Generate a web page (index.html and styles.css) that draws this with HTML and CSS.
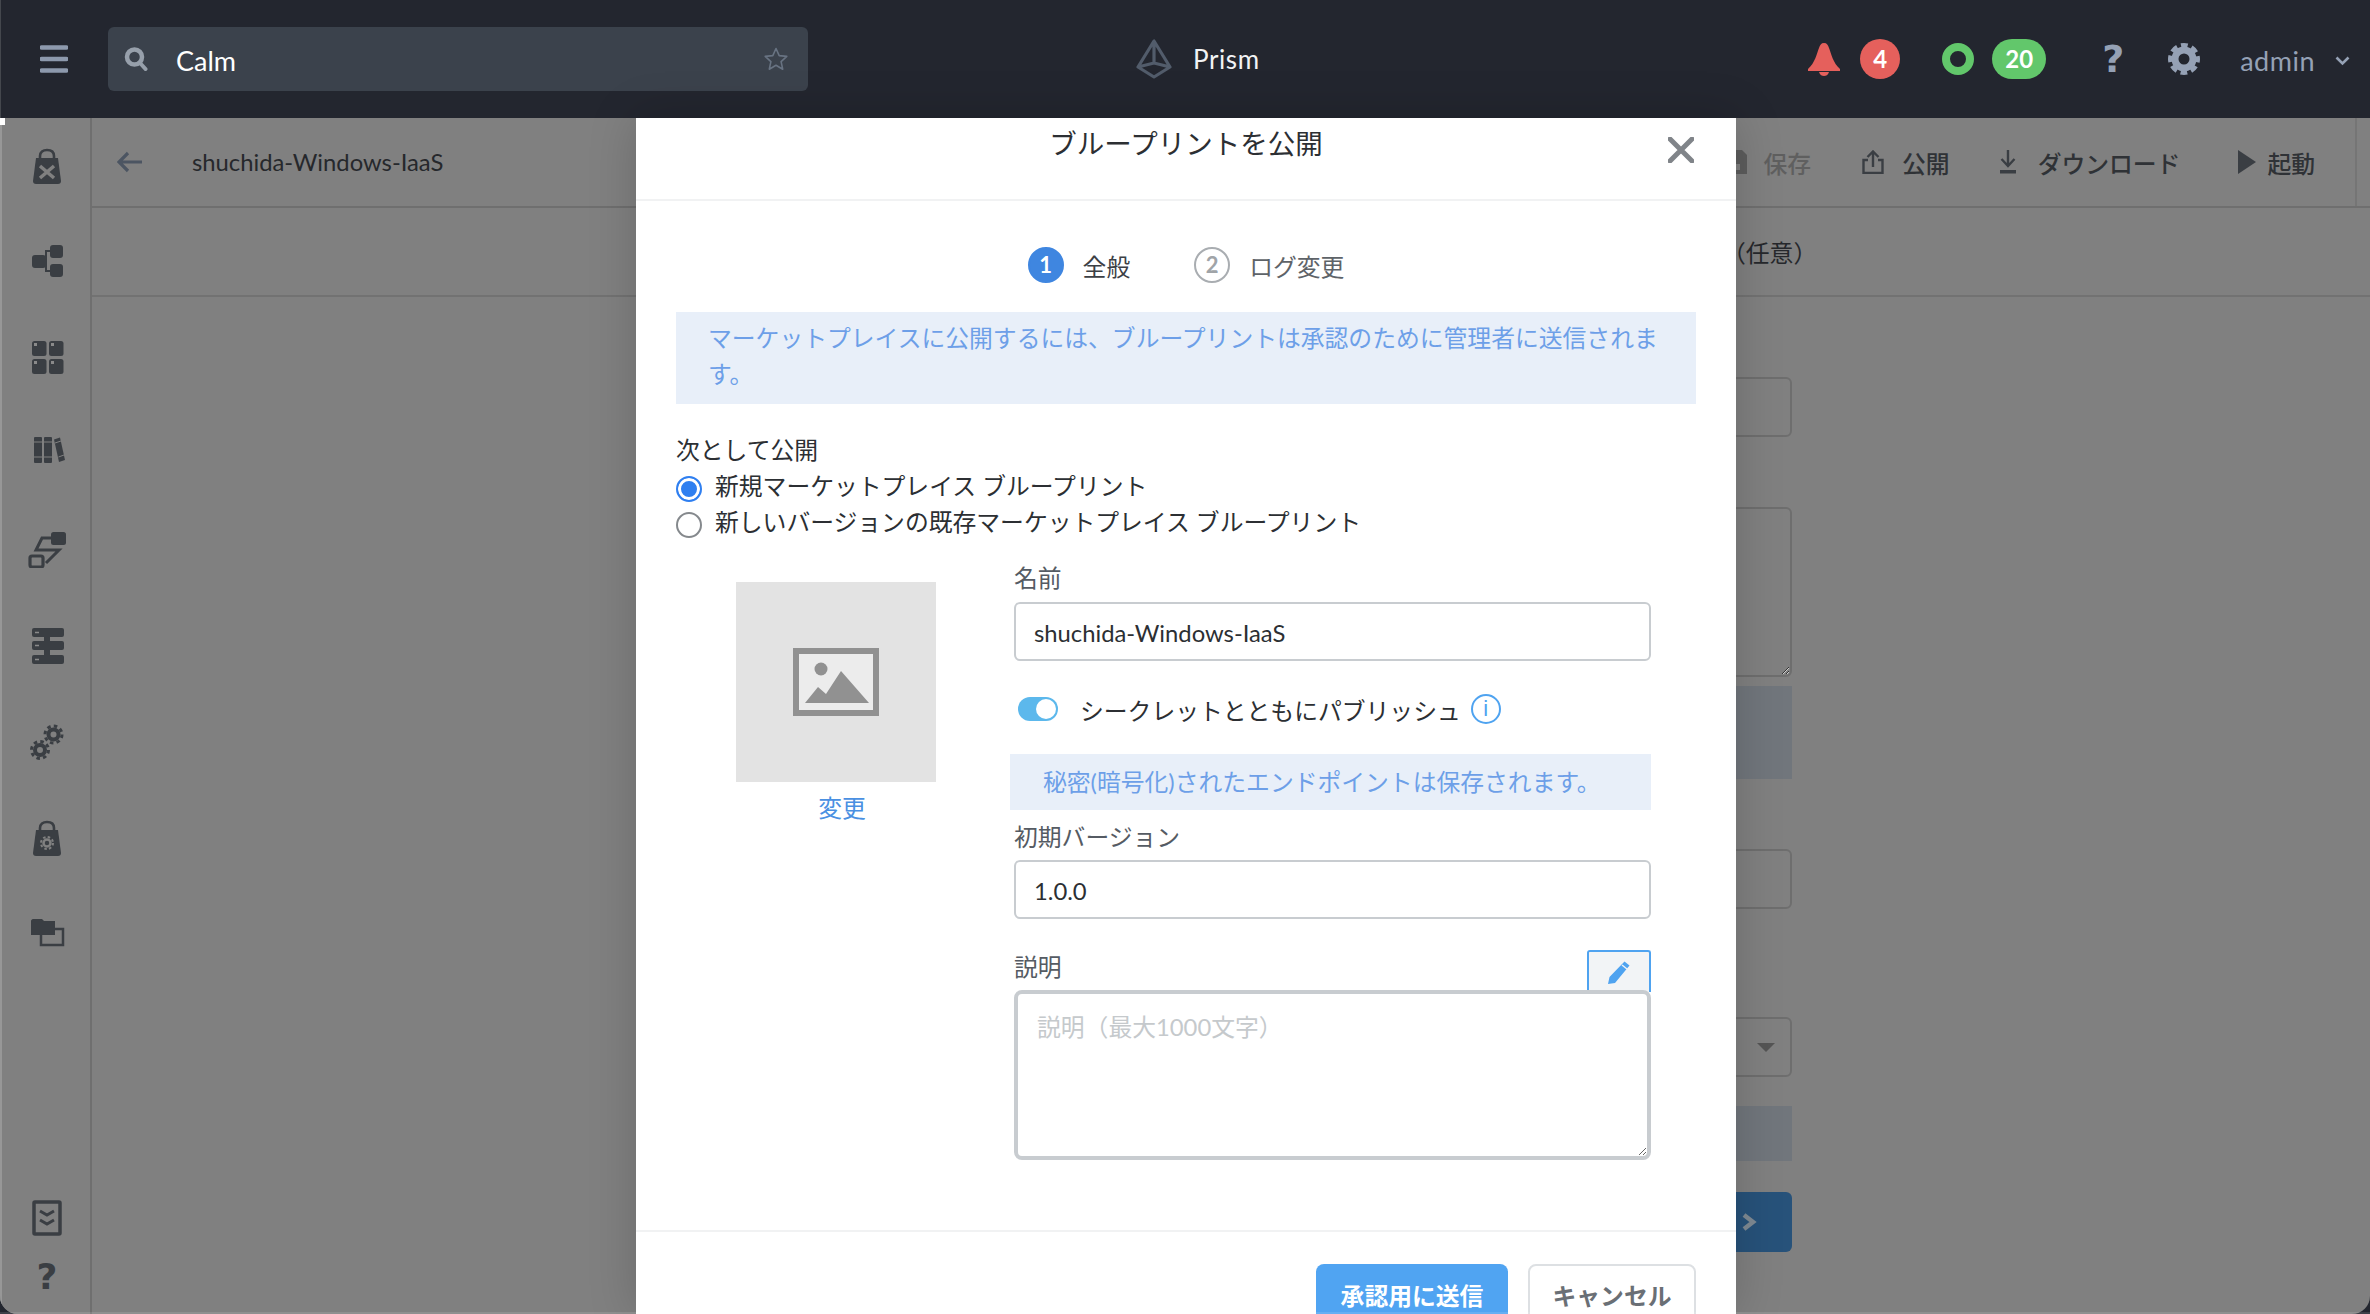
FILE: index.html
```html
<!DOCTYPE html>
<html lang="ja">

<head>
    <meta charset="UTF-8">
    <meta name="viewport" content="width=device-width, initial-scale=1.0">
    <title>Prism - Calm</title>
    <link rel="stylesheet" href="styles.css">
</head>

<body>
    <header class="topbar">
        <svg class="menu-icon" width="28" height="28" viewBox="0 0 28 28">
            <path d="M1.5 2.5H26.5M1.5 14H26.5M1.5 25.5H26.5" stroke="#8d99ad" stroke-width="4.5" stroke-linecap="round" />
        </svg>
        <div class="search">
            <svg width="24" height="24" viewBox="0 0 24 24">
                <circle cx="10.5" cy="10" r="7.5" fill="none" stroke="#97a0ab" stroke-width="4.5" />
                <path d="M16 16L21.5 22" stroke="#97a0ab" stroke-width="4" stroke-linecap="round" />
            </svg>
            <span class="search-text">Calm</span>
            <svg class="star" width="24" height="24" viewBox="0 0 24 24">
                <path d="M12 1.5L15.2 8.6 22.8 9.4 17.1 14.6 18.7 22.2 12 18.3 5.3 22.2 6.9 14.6 1.2 9.4 8.8 8.6Z" fill="none" stroke="#687382" stroke-width="1.6" stroke-linejoin="round" />
            </svg>
        </div>
        <div class="brand">
            <svg width="36" height="40" viewBox="0 0 36 40">
                <path d="M18 2L2 28 18 38 34 28ZM18 2V24M2 28L18 24 34 28" fill="none" stroke="#525c6b" stroke-width="3.2" stroke-linejoin="round" />
            </svg>
            <span>Prism</span>
        </div>
        <div class="status">
            <svg width="32" height="33" viewBox="0 0 32 33">
                <path d="M16 0C19 0 20 2 21 5 23 10 25 20 32 26V28H0V26C7 20 9 10 11 5 12 2 13 0 16 0Z" fill="#e5605c" />
                <path d="M11 29H21C20 32 18 33 16 33 14 33 12 32 11 29Z" fill="#e5605c" />
            </svg>
            <span class="badge badge-red">4</span>
            <span class="ring"></span>
            <span class="badge badge-green">20</span>
            <span class="help">?</span>
            <svg class="gear" width="32" height="32" viewBox="0 0 32 32">
                <circle cx="16" cy="16" r="9" fill="none" stroke="#95a1b5" stroke-width="7" />
                <circle cx="16" cy="16" r="13.5" fill="none" stroke="#95a1b5" stroke-width="5" stroke-dasharray="6.6 3.99" stroke-dashoffset="3.3" />
            </svg>
            <span class="user">admin</span>
            <svg class="caret" width="15" height="10" viewBox="0 0 15 10">
                <path d="M1.5 1.5L7.5 7.5 13.5 1.5" fill="none" stroke="#95a1b5" stroke-width="2.6" />
            </svg>
        </div>
    </header>

    <div class="app">
        <nav class="sidebar">
            <span class="side-item">
                <svg width="36" height="36" viewBox="0 0 36 36">
                    <path d="M11 11V8C11 4 14 2 18 2S25 4 25 8V11" fill="none" stroke="#3a3e43" stroke-width="2.6" />
                    <path d="M7 10H29L32 33C32 35 31 36 29 36H7C5 36 4 35 4 33Z" fill="#3a3e43" />
                    <path d="M11 18L25 30M25 18L11 30" stroke="#808080" stroke-width="3.5" />
                </svg>
            </span>
            <span class="side-item">
                <svg width="36" height="36" viewBox="0 0 36 36">
                    <rect x="3" y="11" width="14" height="13" rx="3" fill="#3a3e43" />
                    <rect x="21" y="1" width="13" height="13" rx="3" fill="#3a3e43" />
                    <rect x="21" y="20" width="13" height="13" rx="3" fill="#3a3e43" />
                    <path d="M21 7H17V27H21M14 17H17" fill="none" stroke="#3a3e43" stroke-width="2" />
                </svg>
            </span>
            <span class="side-item">
                <svg width="36" height="36" viewBox="0 0 36 36">
                    <rect x="3" y="1" width="14.5" height="15" rx="2.5" fill="#3a3e43" />
                    <rect x="20" y="1" width="14.5" height="15" rx="2.5" fill="#3a3e43" />
                    <rect x="3" y="19" width="14.5" height="15" rx="2.5" fill="#3a3e43" />
                    <rect x="20" y="19" width="14.5" height="15" rx="2.5" fill="#3a3e43" />
                    <path d="M5 3h3v3H5zM22 3h3v3h-3zM5 21h3v3H5zM22 21h3v3h-3z" fill="#8a8a8a" />
                </svg>
            </span>
            <span class="side-item">
                <svg width="36" height="36" viewBox="0 0 36 36">
                    <rect x="5" y="1" width="8" height="26" rx="1" fill="#3a3e43" />
                    <rect x="15" y="1" width="8" height="26" rx="1" fill="#3a3e43" />
                    <path d="M25 3.5L31 1.5 36 24 30 26Z" fill="#3a3e43" />
                    <path d="M5 6H13M5 21H13M15 6H23M15 21H23M26 7L32 5M29.5 21L35 19" stroke="#808080" stroke-width="1" />
                </svg>
            </span>
            <span class="side-item">
                <svg width="38" height="36" viewBox="0 0 38 36">
                    <path d="M24 6H14L8 18H31L18 31" fill="none" stroke="#3a3e43" stroke-width="3" />
                    <rect x="23" y="0" width="15" height="13" rx="2.5" fill="#3a3e43" />
                    <rect x="2" y="24" width="13" height="11" rx="2" fill="#808080" stroke="#3a3e43" stroke-width="3.2" />
                </svg>
            </span>
            <span class="side-item">
                <svg width="36" height="36" viewBox="0 0 36 36">
                    <path d="M15 0H21V36H15Z" fill="#3a3e43" />
                    <rect x="3" y="0" width="32" height="9" rx="2" fill="#3a3e43" />
                    <rect x="3" y="13" width="32" height="9" rx="2" fill="#3a3e43" />
                    <rect x="3" y="27" width="32" height="9" rx="2" fill="#3a3e43" />
                    <path d="M6 4.5H10M6 17.5H10M6 31.5H10" stroke="#8a8a8a" stroke-width="1.6" />
                </svg>
            </span>
            <span class="side-item">
                <svg width="36" height="36" viewBox="0 0 36 36">
                    <circle cx="11" cy="26" r="5" fill="none" stroke="#3a3e43" stroke-width="4" />
                    <circle cx="11" cy="26" r="8.5" fill="none" stroke="#3a3e43" stroke-width="3" stroke-dasharray="3.5 3.18" />
                    <circle cx="24.5" cy="10.5" r="5" fill="none" stroke="#3a3e43" stroke-width="4" />
                    <circle cx="24.5" cy="10.5" r="8.5" fill="none" stroke="#3a3e43" stroke-width="3" stroke-dasharray="3.5 3.18" />
                </svg>
            </span>
            <span class="side-item">
                <svg width="36" height="36" viewBox="0 0 36 36">
                    <path d="M11 12V8C11 4 14 2 18 2S25 4 25 8V12" fill="none" stroke="#3a3e43" stroke-width="2.6" />
                    <path d="M7 10H29L32 33C32 35 31 36 29 36H7C5 36 4 35 4 33Z" fill="#3a3e43" />
                    <circle cx="18" cy="23" r="3.5" fill="none" stroke="#808080" stroke-width="2.5" />
                    <circle cx="18" cy="23" r="6" fill="none" stroke="#808080" stroke-width="2" stroke-dasharray="2.5 2.21" />
                </svg>
            </span>
            <span class="side-item">
                <svg width="36" height="36" viewBox="0 0 36 36">
                    <path d="M12 13H34V29H12Z" fill="none" stroke="#3a3e43" stroke-width="2.5" />
                    <path d="M2 5C2 4 3 3 4 3H13L15 5H26V19H2Z" fill="#3a3e43" />
                </svg>
            </span>
            <span class="side-item side-bottom">
                <svg width="36" height="36" viewBox="0 0 36 36">
                    <rect x="5" y="2" width="26" height="32" rx="1" fill="none" stroke="#3a3e43" stroke-width="3.5" />
                    <path d="M11 11L18 15 25 11M11 20L18 24 25 20" fill="none" stroke="#3a3e43" stroke-width="3" />
                </svg>
            </span>
            <span class="side-item side-q">?</span>
        </nav>

        <main class="page">
            <div class="toolbar">
                <svg class="back" width="25" height="22" viewBox="0 0 25 22">
                    <path d="M11 2L2 11 11 20M2 11H25" fill="none" stroke="#4c5562" stroke-width="3.2" />
                </svg>
                <span class="bp-name">shuchida-Windows-IaaS</span>
                <div class="actions">
                    <span class="action action-off">
                        <svg width="24" height="24" viewBox="0 0 24 24">
                            <path d="M2 0H19L24 5V24H0V2Z" fill="#5d5d5d" />
                            <rect x="5" y="14" width="12" height="6" fill="#808080" />
                        </svg>
                        保存
                    </span>
                    <span class="action action-publish">
                        <svg width="22" height="24" viewBox="0 0 22 24">
                            <path d="M6 10H1.5V23H20.5V10H16M11 17V2M5.5 7L11 1.5 16.5 7" fill="none" stroke="#3a3e43" stroke-width="2.4" />
                        </svg>
                        公開
                    </span>
                    <span class="action action-download">
                        <svg width="18" height="24" viewBox="0 0 18 24">
                            <path d="M9 0V15M2.5 9L9 16 15.5 9" fill="none" stroke="#3a3e43" stroke-width="2.4" />
                            <rect x="1" y="20" width="16" height="3.5" fill="#3a3e43" />
                        </svg>
                        ダウンロード
                    </span>
                    <span class="action action-launch">
                        <svg width="18" height="24" viewBox="0 0 18 24">
                            <path d="M0 0L18 12 0 24Z" fill="#3a3e43" />
                        </svg>
                        起動
                    </span>
                </div>
            </div>
            <div class="section-head">（任意）</div>
            <div class="bg-form">
                <div class="bg-input bg-first"></div>
                <textarea class="bg-area" disabled></textarea>
                <div class="bg-note bg-note-tall"></div>
                <div class="bg-input bg-second"></div>
                <div class="bg-input bg-select"><span class="bg-caret"></span></div>
                <div class="bg-note bg-note-short"></div>
                <div class="bg-next">
                    <svg width="16" height="18" viewBox="0 0 16 18">
                        <path d="M3 2L12 9 3 16" fill="none" stroke="#7f8a93" stroke-width="4.5" />
                    </svg>
                </div>
            </div>
        </main>
    </div>

    <section class="modal">
        <div class="modal-head">
            <h2>ブループリントを公開</h2>
            <svg class="close" width="26" height="26" viewBox="0 0 26 26">
                <path d="M2 2L24 24M24 2L2 24" stroke="#808489" stroke-width="5" stroke-linecap="round" />
            </svg>
        </div>
        <div class="modal-body">
            <ol class="steps">
                <li class="step step-on"><span class="step-no">1</span>全般</li>
                <li class="step"><span class="step-no">2</span>ログ変更</li>
            </ol>
            <p class="note note-wide">マーケットプレイスに公開するには、ブループリントは承認のために管理者に送信されます。</p>

            <div class="publish-as">
                <div class="field-title">次として公開</div>
                <label class="radio"><input type="radio" name="as" checked>新規マーケットプレイス ブループリント</label>
                <label class="radio"><input type="radio" name="as">新しいバージョンの既存マーケットプレイス ブループリント</label>
            </div>

            <div class="form-grid">
                <div class="thumb-col">
                    <div class="thumb">
                        <svg width="86" height="68" viewBox="0 0 86 68">
                            <rect x="3" y="3" width="80" height="62" fill="#ececec" stroke="#919191" stroke-width="6" />
                            <circle cx="28" cy="21" r="6.5" fill="#919191" />
                            <path d="M12 55L25 39 33 46 48 23 76 55Z" fill="#919191" />
                        </svg>
                    </div>
                    <a class="thumb-link">変更</a>
                </div>
                <div class="form-col">
                    <label class="field-label">名前</label>
                    <input class="text-input" type="text" value="shuchida-Windows-IaaS">
                    <div class="secret-row">
                        <span class="toggle"></span>
                        <span>シークレットとともにパブリッシュ</span>
                        <span class="info">i</span>
                    </div>
                    <p class="note note-secret">秘密(暗号化)されたエンドポイントは保存されます。</p>
                    <label class="field-label label-version">初期バージョン</label>
                    <input class="text-input input-version" type="text" value="1.0.0">
                    <div class="desc-head">
                        <label class="field-label">説明</label>
                        <span class="edit-btn">
                            <svg width="24" height="24" viewBox="0 0 24 24">
                                <path d="M17.5 1.5L22.5 5.5 8 23 1 24 2.5 17ZM1 24L2.5 19 6 22Z" fill="#4fa3f0" />
                                <path d="M15 5L20 9" stroke="#f2f4f6" stroke-width="1.5" />
                            </svg>
                        </span>
                    </div>
                    <textarea class="desc" placeholder="説明（最大1000文字）"></textarea>
                </div>
            </div>
        </div>
        <div class="modal-foot">
            <button class="btn btn-primary">承認用に送信</button>
            <button class="btn btn-cancel">キャンセル</button>
        </div>
    </section>
</body>

</html>
```

FILE: styles.css
```css
* {
    box-sizing: border-box;
}

html,
body {
    height: 100%;
}

body {
    position: relative;
    margin: 0;
    overflow: hidden;
    background-color: #23262f;
    color: #2c2f33;
    font-family: Lato, "Noto Sans CJK JP", sans-serif;
    font-size: 23.8px;
}

/* small white notch at the corner of the nav */
body::before {
    content: "";
    position: absolute;
    top: 118px;
    left: 0;
    width: 5px;
    height: 7px;
    background-color: #fff;
}

/* faint line along the bottom of the window */
body::after {
    content: "";
    position: absolute;
    left: 0;
    right: 0;
    bottom: 0;
    height: 2px;
    background-color: rgba(255, 255, 255, 0.12);
}

.topbar {
    display: flex;
    align-items: center;
    height: 118px;
    padding: 0 20px 0 40px;
    border-left: 1px solid #44474d;
}

.menu-icon {
    flex: none;
    margin-left: -1px;
}

.search {
    display: flex;
    align-items: center;
    width: 700px;
    height: 64px;
    margin-left: 40px;
    padding: 0 20px 0 16px;
    border-radius: 6px;
    background-color: #3b424c;
}

.search-text {
    margin-left: 28px;
    padding-top: 2px;
    color: #fff;
    font-size: 27px;
}

.star {
    margin-left: auto;
}

.brand {
    display: flex;
    align-items: center;
    gap: 21px;
    margin-left: 328px;
    color: #f2f3f5;
    font-size: 26px;
    letter-spacing: 0.6px;
}

.status {
    display: flex;
    align-items: center;
    margin-left: auto;
}

.badge {
    height: 40px;
    border-radius: 20px;
    color: #fff;
    font-size: 24px;
    font-weight: 700;
    line-height: 40px;
    text-align: center;
}

.badge-red {
    width: 40px;
    margin-left: 20px;
    background-color: #e5605c;
}

.ring {
    width: 32px;
    height: 32px;
    margin-left: 42px;
    border: 8px solid #62c76b;
    border-radius: 50%;
}

.badge-green {
    width: 54px;
    margin-left: 18px;
    background-color: #62c76b;
}

.help {
    width: 20px;
    margin-left: 56px;
    color: #95a1b5;
    font-family: "DejaVu Sans", sans-serif;
    font-size: 38px;
    font-weight: 700;
    line-height: 40px;
    text-align: center;
}

.gear {
    margin-left: 46px;
}

.user {
    margin-left: 40px;
    color: #95a1b5;
    font-size: 27px;
    letter-spacing: 0.5px;
    padding-top: 2px;
}

.caret {
    margin: 4px 0 0 20px;
}

.app {
    display: flex;
    height: 1196px;
    border-radius: 0 0 18px 18px;
    background-color: #808080;
    overflow: hidden;
}

.sidebar {
    display: flex;
    flex: none;
    flex-direction: column;
    align-items: center;
    width: 92px;
    padding: 0 0 9px 2px;
    border-left: 2px solid #979797;
    border-right: 2px solid #6f6f6f;
    background-color: #808080;
}

.side-item {
    display: flex;
    flex: none;
    align-items: center;
    justify-content: center;
    height: 96px;
    color: #3a3e43;
}

.side-bottom {
    height: 58px;
    margin-top: auto;
}

.side-q {
    height: 58px;
    font-family: "DejaVu Sans", sans-serif;
    font-size: 36px;
    font-weight: 700;
}

.page {
    flex: 1;
    min-width: 0;
}

.toolbar {
    display: flex;
    align-items: center;
    height: 90px;
    padding: 0 13px 0 25px;
    border-bottom: 2px solid #6f6f6f;
}

.back {
    flex: none;
}

.bp-name {
    margin-left: 50px;
    color: #26282c;
}

.actions {
    display: flex;
    align-items: center;
    align-self: stretch;
    margin-left: auto;
    padding-right: 40px;
    border-right: 2px solid #757575;
}

.action {
    display: flex;
    align-items: center;
    gap: 18px;
    color: #2f3236;
    font-weight: 500;
}

.action-off {
    color: #5f5f5f;
    gap: 16px;
}

.action-publish {
    margin-left: 51px;
}

.action-download {
    margin-left: 49px;
    gap: 21px;
}

.action-launch {
    margin-left: 58px;
    gap: 11px;
}

.section-head {
    height: 89px;
    padding-left: 1630px;
    border-bottom: 2px solid #727272;
    color: #26282c;
    line-height: 90px;
}

.bg-form {
    display: flex;
    flex-direction: column;
    width: 691px;
    margin-left: 1009px;
}

.bg-input {
    height: 60px;
    border: 2px solid #6e6e6e;
    border-radius: 6px;
}

.bg-first {
    margin-top: 80px;
}

.bg-area {
    display: block;
    height: 170px;
    margin-top: 70px;
    border: 2px solid #6e6e6e;
    border-radius: 6px;
    background: transparent;
    resize: vertical;
}

.bg-note {
    background-color: #71767c;
}

.bg-note-tall {
    height: 93px;
    margin-top: 9px;
}

.bg-second {
    margin-top: 70px;
}

.bg-select {
    position: relative;
    margin-top: 108px;
}

.bg-caret {
    position: absolute;
    right: 15px;
    top: 24px;
    border: 9px solid transparent;
    border-top: 9px solid #555;
    border-bottom: 0;
}

.bg-note-short {
    height: 55px;
    margin-top: 29px;
}

.bg-next {
    display: flex;
    align-items: center;
    height: 60px;
    margin-top: 31px;
    padding-left: 640px;
    border-radius: 6px;
    background-color: #27527a;
}

.modal {
    position: absolute;
    top: 118px;
    left: 636px;
    bottom: 0;
    display: flex;
    flex-direction: column;
    width: 1100px;
    background-color: #fff;
    box-shadow: 0 0 45px rgba(0, 0, 0, 0.18);
    overflow: hidden;
}

.modal-head {
    position: relative;
    flex: none;
    height: 83px;
    border-bottom: 2px solid #f1f2f3;
}

.modal-head h2 {
    margin: 0;
    padding-top: 6px;
    color: #2c2f33;
    font-size: 27.5px;
    font-weight: 400;
    line-height: 40px;
    text-align: center;
}

.close {
    position: absolute;
    top: 19px;
    right: 42px;
}

.modal-body {
    flex: 1;
    padding: 47px 40px 0;
}

.steps {
    display: flex;
    justify-content: center;
    gap: 64px;
    margin: 0;
    padding: 0;
    list-style: none;
}

.step {
    display: flex;
    align-items: center;
    gap: 19px;
    height: 34px;
    color: #5e6368;
}

.step-on {
    color: #3c4045;
}

.step-no {
    flex: none;
    width: 36px;
    height: 36px;
    border: 2px solid #a9adb1;
    border-radius: 50%;
    color: #a0a4a8;
    font-size: 22px;
    font-weight: 700;
    line-height: 32px;
    text-align: center;
}

.step-on .step-no {
    border-color: #3f86e0;
    background-color: #3f86e0;
    color: #fff;
}

.note {
    margin: 0;
    background-color: #e8eff9;
    color: #6d9fe8;
    line-height: 36px;
}

.note-wide {
    height: 92px;
    margin-top: 30px;
    padding: 8px 24px 8px 32px;
}

.publish-as {
    margin-top: 30px;
}

.field-title {
    height: 32px;
    line-height: 33px;
}

.radio {
    display: flex;
    align-items: center;
    gap: 13px;
    height: 36px;
    padding-top: 1px;
}

.radio input {
    flex: none;
    width: 26px;
    height: 26px;
    margin: 8px 0 0;
    border: 2px solid #85898d;
    border-radius: 50%;
    background-color: #fff;
    appearance: none;
}

.radio input:checked {
    border-color: #2f7ff0;
    box-shadow: inset 0 0 0 3px #fff;
    background-color: #2f7ff0;
}

.form-grid {
    display: grid;
    grid-template-columns: 338px 637px;
    margin-top: 24px;
}

.thumb-col {
    display: flex;
    flex-direction: column;
    padding: 20px 0 0 60px;
}

.thumb {
    display: flex;
    align-items: center;
    justify-content: center;
    width: 200px;
    height: 200px;
    background-color: #e3e3e3;
}

.thumb-link {
    width: 200px;
    margin-top: 11px;
    padding-left: 12px;
    color: #4a90e2;
    line-height: 30px;
    text-align: center;
}

.form-col {
    display: flex;
    flex-direction: column;
}

.field-label {
    height: 32px;
    color: #555b63;
    line-height: 32px;
}

.text-input {
    width: 637px;
    height: 59px;
    margin-top: 8px;
    padding: 2px 18px 0;
    border: 2px solid #c8ccd0;
    border-radius: 6px;
    color: #2c2f33;
    font: inherit;
    outline: none;
}

.secret-row {
    display: flex;
    align-items: center;
    height: 30px;
    margin-top: 33px;
    padding-left: 4px;
}

.toggle {
    position: relative;
    flex: none;
    width: 40px;
    height: 24px;
    margin-right: 22px;
    border-radius: 12px;
    background-color: #5cb8ec;
}

.toggle::after {
    content: "";
    position: absolute;
    top: 2px;
    right: 2px;
    width: 20px;
    height: 20px;
    border-radius: 50%;
    background-color: #fff;
}

.info {
    width: 30px;
    height: 30px;
    margin-left: 10px;
    border: 2px solid #4fa3f0;
    border-radius: 50%;
    color: #4fa3f0;
    font-family: "Liberation Sans", sans-serif;
    font-size: 22px;
    line-height: 26px;
    text-align: center;
}

.note-secret {
    height: 56px;
    margin: 30px 0 0 -4px;
    padding-left: 33px;
    line-height: 56px;
}

.label-version {
    margin-top: 11px;
}

.input-version {
    margin-top: 7px;
}

.desc-head {
    display: flex;
    align-items: flex-end;
    justify-content: space-between;
    height: 42px;
    margin-top: 31px;
}

.desc-head .field-label {
    align-self: flex-start;
    margin-top: 1px;
}

.edit-btn {
    display: flex;
    align-items: center;
    justify-content: center;
    width: 64px;
    height: 42px;
    border: 2px solid #4fa3f0;
    border-bottom: 0;
    border-radius: 3px 3px 0 0;
    background-color: #f2f4f6;
}

.desc {
    display: block;
    position: relative;
    width: 637px;
    height: 170px;
    margin-top: -2px;
    padding: 14px 19px;
    border: 4px solid #c8ccd0;
    border-radius: 8px;
    color: #2c2f33;
    font: inherit;
    outline: none;
    resize: vertical;
}

.desc::placeholder {
    color: #c5c9cc;
}

.modal-foot {
    display: flex;
    flex: none;
    justify-content: flex-end;
    gap: 20px;
    height: 84px;
    padding: 32px 40px 0;
    border-top: 2px solid #f1f2f3;
}

.btn {
    height: 60px;
    border-radius: 8px;
    font: inherit;
    font-weight: 700;
}

.btn-primary {
    width: 192px;
    border: 0;
    background-color: #50a4f2;
    color: #fff;
}

.btn-cancel {
    width: 168px;
    border: 2px solid #dde0e3;
    background-color: #fff;
    color: #6a6f75;
}
```
